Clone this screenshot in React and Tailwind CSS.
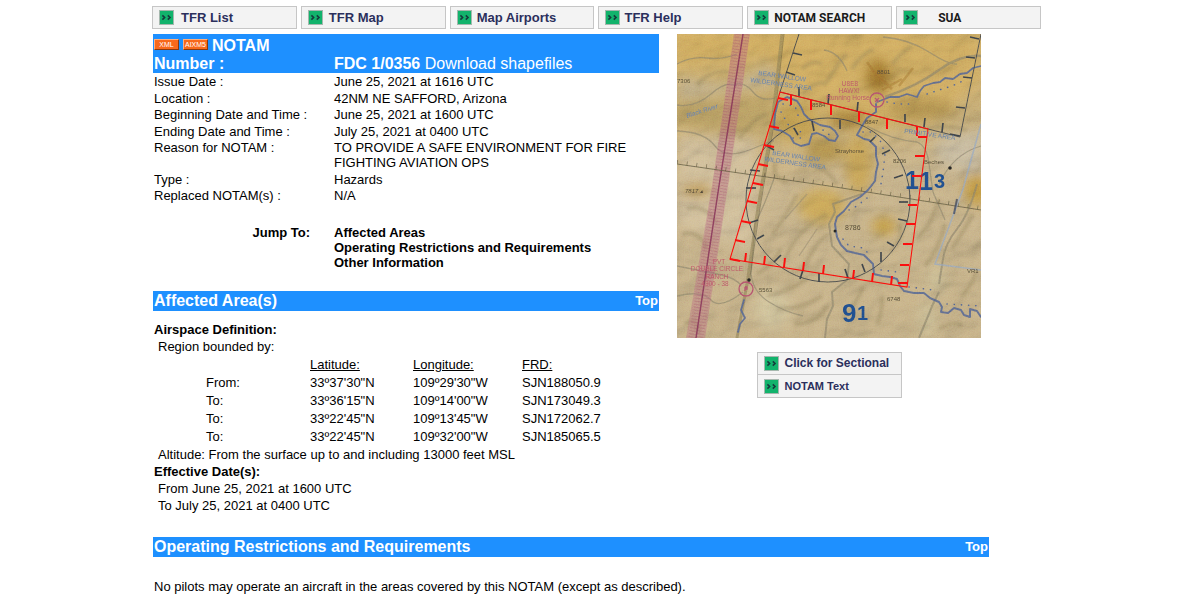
import React from "react";

const NAV = [
  { label: "TFR List", style: "pl-[7px] text-[13px] text-[#2b2f5c]" },
  { label: "TFR Map", style: "pl-[6px] text-[13px] text-[#2b2f5c]" },
  { label: "Map Airports", style: "pl-[5px] text-[13px] text-[#2b2f5c]" },
  { label: "TFR Help", style: "pl-[4px] text-[13px] text-[#2b2f5c]" },
  { label: "NOTAM SEARCH", style: "pl-[5px] font-['Roboto'] text-[12px] text-[#1b1b1b]" },
  { label: "SUA", style: "pl-[20px] font-['Roboto'] text-[12px] text-[#1b1b1b]" },
];

const DETAILS = [
  ["Issue Date :", "June 25, 2021 at 1616 UTC"],
  ["Location :", "42NM NE SAFFORD, Arizona"],
  ["Beginning Date and Time :", "June 25, 2021 at 1600 UTC"],
  ["Ending Date and Time :", "July 25, 2021 at 0400 UTC"],
  ["Reason for NOTAM :", "TO PROVIDE A SAFE ENVIRONMENT FOR FIRE FIGHTING AVIATION OPS"],
  ["Type :", "Hazards"],
  ["Replaced NOTAM(s) :", "N/A"],
];

const POINTS = [
  ["From:", "33º37'30\"N", "109º29'30\"W", "SJN188050.9"],
  ["To:", "33º36'15\"N", "109º14'00\"W", "SJN173049.3"],
  ["To:", "33º22'45\"N", "109º13'45\"W", "SJN172062.7"],
  ["To:", "33º22'45\"N", "109º32'00\"W", "SJN185065.5"],
];

function Arrows() {
  return (
    <svg className="size-[15px] shrink-0" viewBox="0 0 15 15" aria-hidden="true">
      <rect x="0.5" y="0.5" width="14" height="14" fill="#12b36c" stroke="#a5b8ae" />
      <path d="M3.4 5.4l2.2 2.1-2.2 2.1M8.8 5.4l2.2 2.1-2.2 2.1" fill="none" stroke="#153a3c" strokeWidth="1.6" />
    </svg>
  );
}

function Bar({ title }) {
  return (
    <div className="flex h-5 items-center justify-between bg-[#1e90ff] px-px font-bold text-white">
      <h2 className="text-[16px] leading-5">{title}</h2>
      <a href="#top" className="text-[13px] leading-5">Top</a>
    </div>
  );
}

function Badge({ children }) {
  return (
    <a href="#download" className="mr-1 mb-1 flex h-[11px] w-[25px] items-center justify-center border border-t-[#ffb080] border-r-[#8a3a10] border-b-[#8a3a10] border-l-[#ffb080] bg-[#f8691c] text-[7px] leading-none font-normal">
      {children}
    </a>
  );
}

const TOP_TICKS = [[114, 61], [134, 66], [154, 71], [182, 78], [210, 85], [240, 92]];
const LEFT_TICKS = [[101, 64], [92, 92], [87, 111], [81, 130], [76, 149], [70, 167], [64, 187], [58, 206], [53, 225]];
const BOTTOM_TICKS = [[68, 228], [87, 231], [107, 233], [126, 237], [146, 240], [176, 245], [195, 248], [214, 251]];
const RIGHT_TICKS = [[250, 103], [247, 122], [244, 142], [240, 171], [238, 190], [235, 210], [232, 231], [230, 249]];
const OUTER_TICKS = [
  "M116 19l9 2", "M109 38l9 3", "M122 62v-9", "M151 70l1-10", "M180 78l1-10", "M228 88v-8", "M247 93l1-9",
  "M265 98l1-9", "M283 102l-10-2", "M288 74l-9-1", "M295 44l-9-1", "M298 24l-9-1", "M302 5l-9-2",
];
const RING_TICKS = [
  "M135 87l2 10", "M163 86v9", "M117 94l4 7", "M90 112l7 4", "M198 103l-5 5", "M213 116l-8 4", "M226 141l-9 3",
  "M231 168h-9", "M230 187l-9-2", "M217 212l-7-4", "M204 228v-10", "M188 238l-3-8", "M171 244l-3-9", "M142 248v-9",
  "M123 245l3-9", "M97 228l7-7", "M80 205l7-4", "M72 189l9-3", "M69 154h10", "M73 136l10 1",
];
const RIDGES = [
  "M95 200Q110 182 120 160", "M108 225Q120 195 150 180", "M128 232Q140 205 152 200", "M80 240Q95 232 104 215",
  "M90 262Q110 258 130 245", "M100 275Q125 275 145 262", "M118 290Q140 290 150 272", "M165 285Q180 270 186 252",
  "M200 290Q206 275 205 262", "M212 218Q228 205 222 190", "M240 205Q255 190 262 165", "M248 232Q262 215 268 190",
  "M275 215Q288 195 296 180", "M285 262Q296 250 300 235", "M262 295Q280 285 285 292", "M10 175Q30 170 40 190",
  "M5 200Q22 195 30 215", "M8 290Q20 280 22 300", "M125 35Q135 25 145 30", "M150 48Q160 30 170 20",
  "M175 35Q182 22 196 15", "M215 30Q225 18 235 12", "M250 95Q270 90 290 96", "M125 60Q140 45 150 50",
  "M20 50Q35 35 52 38", "M62 105Q75 85 90 80", "M135 130Q150 135 160 150", "M110 148Q95 145 98 128",
];

function SectionalMap() {
  return (
    <svg className="block aspect-square w-full" viewBox="0 0 304 304" role="img" aria-label="Sectional chart of the restricted area">
      <defs>
        <linearGradient id="land" x1="0" y1="0" x2="0.15" y2="1">
          <stop offset="0" stopColor="#d2ae64" />
          <stop offset="0.35" stopColor="#caac6e" />
          <stop offset="0.55" stopColor="#c8b286" />
          <stop offset="1" stopColor="#c6b083" />
        </linearGradient>
        <filter id="soft" x="-30%" y="-30%" width="160%" height="160%">
          <feGaussianBlur stdDeviation="6" />
        </filter>
        <filter id="ridge" x="-10%" y="-10%" width="120%" height="120%">
          <feGaussianBlur stdDeviation="1.6" />
        </filter>
        <filter id="relief" x="0" y="0" width="100%" height="100%">
          <feTurbulence type="fractalNoise" baseFrequency="0.022 0.03" numOctaves="3" seed="8" />
          <feColorMatrix values="0 0 0 0 0  0 0 0 0 0  0 0 0 0 0  1 0 0 0 0" />
          <feDiffuseLighting surfaceScale="9" lightingColor="#ffffff">
            <feDistantLight azimuth="225" elevation="52" />
          </feDiffuseLighting>
        </filter>
        <filter id="grain" x="0" y="0" width="100%" height="100%">
          <feTurbulence type="fractalNoise" baseFrequency="0.8" numOctaves="2" seed="3" />
          <feColorMatrix type="saturate" values="0.5" />
          <feComponentTransfer><feFuncA type="linear" slope="0" intercept="1" /></feComponentTransfer>
        </filter>
        <clipPath id="frame"><rect width="304" height="304" /></clipPath>
      </defs>
      <g clipPath="url(#frame)">
        <rect width="304" height="304" fill="url(#land)" />
        <g filter="url(#soft)">
          <path d="M0 0H304V45L250 90 170 95 110 50 90 20 0 30Z" fill="#d3aa58" opacity="0.7" />
          <path d="M0 62L60 70 95 60 92 85 60 100 0 92Z" fill="#b59a5e" opacity="0.9" />
          <path d="M0 42L50 50 95 30 100 52 60 58 0 66Z" fill="#c0b08c" opacity="0.8" />
          <path d="M0 100L80 105 75 215 0 190Z" fill="#d2bf98" opacity="0.9" />
          <path d="M258 108L304 95V140L262 130Z" fill="#c9bda0" opacity="0.9" />
          <ellipse cx="120" cy="88" rx="22" ry="20" fill="#c39d50" />
          <ellipse cx="148" cy="116" rx="20" ry="12" fill="#b18f4c" />
          <ellipse cx="182" cy="130" rx="14" ry="30" fill="#c8a254" />
          <ellipse cx="145" cy="172" rx="24" ry="18" fill="#cba452" opacity="0.9" />
          <ellipse cx="207" cy="192" rx="12" ry="9" fill="#c69b42" />
          <ellipse cx="20" cy="156" rx="16" ry="7" fill="#c59a4a" opacity="0.8" />
          <ellipse cx="300" cy="156" rx="12" ry="16" fill="#c5983f" />
          <ellipse cx="201" cy="42" rx="13" ry="18" fill="#a0742f" />
          <ellipse cx="245" cy="75" rx="34" ry="10" fill="#ae8c4c" />
          <ellipse cx="170" cy="85" rx="20" ry="9" fill="#ab823c" />
          <ellipse cx="95" cy="275" rx="18" ry="20" fill="#d3c498" />
          <ellipse cx="260" cy="245" rx="8" ry="14" fill="#d0c294" />
          <ellipse cx="250" cy="285" rx="8" ry="18" fill="#d0c294" />
        </g>
        <rect width="304" height="304" filter="url(#relief)" className="opacity-30 mix-blend-multiply" />
        <g fill="none" stroke="#837350" strokeWidth="4" opacity="0.35" filter="url(#ridge)">
          {RIDGES.map((d) => <path key={d} d={d} />)}
        </g>
        <path d="M190 28L197 38 215 55M222 52L236 34M205 56L225 45" fill="none" stroke="#9c6a2c" strokeWidth="2.5" opacity="0.45" />

        <g fill="none" stroke="#857c65" strokeWidth="1.3" opacity="0.65">
          <path d="M0 30Q15 22 30 24T60 20" />
          <path d="M0 97Q28 98 38 112T75 115 95 108" />
          <path d="M0 71Q18 74 34 60T60 52" />
          <path d="M58 50Q68 48 76 58T98 64" />
          <path d="M147 16Q162 18 170 37" />
          <path d="M206 3Q232 5 252 18T280 30" />
          <path d="M208 63Q240 52 262 36T304 22" strokeWidth="2.4" />
          <path d="M190 92Q215 106 240 108Q250 112 252 130L256 158 268 186" />
          <path d="M262 150Q276 120 304 112" />
          <path d="M98 142Q88 170 78 190L74 240Q76 258 92 268T126 282" />
          <path d="M0 232Q20 236 40 240T64 252" />
          <path d="M0 262Q25 256 34 266T66 258" />
          <path d="M148 304L150 285 156 272 155 258 170 246 172 230 155 212 152 190 158 178 156 170 185 160" strokeWidth="2" />
          <path d="M300 150Q292 180 280 195T266 225L262 250" strokeWidth="2" />
          <path d="M242 304L256 270 262 258" strokeWidth="2" />
          <path d="M130 160L108 185M140 195L122 222" opacity="0.7" />
        </g>

        <path d="M57 0H73L51 152L28 304H9L35 152Z" fill="#b35f7a" opacity="0.4" />
        <path d="M61 0L39 152L15 304M69 0L47 152L23 304" fill="none" stroke="#93405f" strokeWidth="7" strokeDasharray="1 2" opacity="0.28" />
        <path d="M66 0L42 152L19 304" stroke="#78294f" strokeWidth="1.5" fill="none" opacity="0.8" />

        <path d="M105 0L95 90 80 180 70 250 60 304" fill="none" stroke="#857650" strokeWidth="3" opacity="0.6" />
        <path d="M107 0L97 90 82 180 72 250" fill="none" stroke="#4d4a37" strokeWidth="0.8" opacity="0.6" />
        <path d="M0 130L152 152L304 176" fill="none" stroke="#5b543f" strokeWidth="0.8" />
        <path d="M0 128L152 150L304 174" fill="none" stroke="#5b543f" strokeWidth="4" strokeDasharray="0.8 9" opacity="0.8" />
        <path d="M304 90L286 155 258 230 304 236" fill="none" stroke="#8fa3bd" strokeWidth="1.6" opacity="0.7" />
        <path d="M280 165L277 180" stroke="#3d4458" strokeWidth="2" opacity="0.8" />

        <g fill="none" stroke="#4d5f8c" strokeLinecap="round" strokeLinejoin="round" opacity="0.85">
          <path d="M304 32L296 34 290 39 283 40 276 45 268 44 263 48 256 49 247 52 243 57 240 63 230 60 222 63 213 63 200 68" strokeWidth="1.8" />
          <path d="M97 95L105 97 113 102 117 109 124 112 132 110 135 100 140 99 147 102 152 106 158 107 161 102 158 97 153 93 143 91 135 87 131 84 127 80 124 73 120 67 110 63 101 68 98 80 97 95" strokeWidth="1.9" />
          <path d="M199 70L199 78 190 84 185 92 180 101 187 105 192 106 199 113 199 122 201 130 199 138 198 147 191 156 183 163 174 168 167 177 160 183 158 190 159 197 160 203 164 211 170 217 178 219 187 221 196 230 197 240 205 242 213 243 220 245 223 252 227 257 237 259 247 259 253 264 262 268 265 273 264 278 271 279 277 274 284 276 287 281 293 283 293 275 300 277 304 283" strokeWidth="2" />
          <path d="M67 266L64 276 68 284 63 290 61 298" strokeWidth="1.8" />
        </g>
        <g fill="none" stroke="#4d5f8c" strokeWidth="1.6" strokeDasharray="0.2 7" strokeLinecap="round">
          <path d="M106 70L118 72 122 84M104 78L112 92 124 98M116 104L128 104M146 96L154 102" />
          <path d="M186 98L195 98 204 108 208 120 206 138 204 150" />
          <path d="M172 176L180 172 190 164" />
          <path d="M166 205L172 212 186 214 194 222M204 236L220 238M232 253L256 256M270 270L304 272" />
          <path d="M210 68L222 70 236 70M250 60L262 56 275 52 290 45" />
        </g>

        <g fill="none" stroke="#3a4046" strokeWidth="0.9">
          <circle cx="151" cy="166" r="82" />
          <path d="M122 0L103 58L283 103L304 0" />
        </g>
        <g stroke="#3a4046" strokeWidth="1.7">
          {[...RING_TICKS, ...OUTER_TICKS].map((d) => <path key={d} d={d} />)}
        </g>

        <g className="font-['Liberation_Sans'] font-bold" fill="#1e4a86">
          <text x="228" y="155" fontSize="25">1</text>
          <text x="242" y="156" fontSize="25">1</text>
          <text x="257" y="154" fontSize="20">3</text>
          <text x="165" y="288" fontSize="26">9</text>
          <text x="180" y="286" fontSize="20">1</text>
        </g>

        <path d="M103 58L251 95L230 253L53 225Z" fill="none" stroke="#fb0d0d" strokeWidth="1.1" />
        <g stroke="#fb0d0d" strokeWidth="2">
          {TOP_TICKS.map(([x, y]) => <path key={x} d={`M${x} ${y}v10`} />)}
          {LEFT_TICKS.map(([x, y]) => <path key={x} d={`M${x} ${y}l10 2`} />)}
          {BOTTOM_TICKS.map(([x, y]) => <path key={x} d={`M${x} ${y}l1 -9`} />)}
          {RIGHT_TICKS.map(([x, y]) => <path key={x} d={`M${x} ${y}h-9`} />)}
        </g>

        <g fill="none" stroke="#b04e68" strokeWidth="1.3">
          <circle cx="200" cy="66" r="7" />
          <path d="M198 64l4 4M202 64l-4 4" />
          <circle cx="69" cy="255" r="7" />
          <path d="M68 253v4M68 253h2v2h-2" />
        </g>
        <circle cx="72" cy="246" r="1.8" fill="#222" />
        <circle cx="273" cy="134" r="1.8" fill="#222" />
        <circle cx="158" cy="197" r="1.5" fill="#222" />

        <g className="font-['Liberation_Sans']" fontSize="6.5" fill="#5877a6">
          <text x="81" y="41" transform="rotate(8 81 41)">BEAR WALLOW</text>
          <text x="73" y="48" transform="rotate(8 73 48)">WILDERNESS AREA</text>
          <text x="95" y="121" transform="rotate(8 95 121)">BEAR WALLOW</text>
          <text x="87" y="127" transform="rotate(8 87 127)">WILDERNESS AREA</text>
          <text x="227" y="99" transform="rotate(8 227 99)">PRIMITIVE AREA</text>
          <text x="10" y="84" transform="rotate(-18 10 84)" className="italic">Black River</text>
        </g>
        <g className="font-['Liberation_Sans']" fontSize="6.5" fill="#b85062" textAnchor="middle">
          <text x="173" y="52">U8E8</text>
          <text x="172" y="59">HAWX!</text>
          <text x="171" y="66">Running Horse</text>
          <text x="42" y="230">PVT</text>
          <text x="40" y="237">DOUBLE CIRCLE</text>
          <text x="40" y="245">RANCH</text>
          <text x="38" y="252">4300 - 38</text>
        </g>
        <g className="font-['Liberation_Sans']" fontSize="6" fill="#4b4434">
          <text x="0" y="49">7306</text>
          <text x="8" y="159" className="italic">7817 ▴</text>
          <text x="200" y="40">8801</text>
          <text x="158" y="119">Strayhorse</text>
          <text x="188" y="90">8847</text>
          <text x="135" y="73">8584</text>
          <text x="216" y="129">8206</text>
          <text x="247" y="130">Beches</text>
          <text x="168" y="196" fontSize="7">8786</text>
          <text x="210" y="267">6748</text>
          <text x="82" y="258">5563</text>
          <text x="290" y="239">VR1</text>
        </g>
        <rect width="304" height="304" filter="url(#grain)" className="opacity-20 mix-blend-overlay" />
      </g>
    </svg>
  );
}

export default function App() {
  return (
    <div id="top" className="min-h-screen bg-white font-['Liberation_Sans',Arial,sans-serif] text-[13px] leading-[15px] text-black">
      <div className="mx-auto max-w-[896px] pt-[6px]">
        <nav className="mr-[7px] grid grid-cols-6 gap-1">
          {NAV.map(({ label, style }) => (
            <a key={label} href="#nav" className="flex h-[23px] items-center border border-[#c6c6c6] bg-[#f3f3f3] pl-[6px]">
              <Arrows />
              <span className={`font-bold leading-none ${style}`}>{label}</span>
            </a>
          ))}
        </nav>

        <main className="mr-[59px] ml-px mt-[5px]">
          <div className="flex items-start justify-between gap-4">
            <div className="max-w-[506px] grow">
              <header className="flex h-[39px] items-end bg-[#1e90ff] pl-px text-[16px] leading-[18px] text-white">
                <h1 className="w-[180px] pr-12 font-bold">
                  <span className="flex items-center">
                    <Badge>XML</Badge>
                    <Badge>AIXM5</Badge>
                    NOTAM
                  </span>
                  Number :
                </h1>
                <p><b>FDC 1/0356</b> <a href="#shapefiles">Download shapefiles</a></p>
              </header>

              <table className="h-[131px] w-full text-left align-top">
                <tbody>
                  {DETAILS.map(([label, value]) => (
                    <tr key={label} className="align-top">
                      <th scope="row" className="w-[181px] pt-px pl-px font-normal">{label}</th>
                      <td className="pt-px pr-4">{value}</td>
                    </tr>
                  ))}
                </tbody>
              </table>

              <div className="mt-[21px] mb-[21px] flex font-bold">
                <span className="w-[157px] text-right">Jump To:</span>
                <nav className="ml-6 flex flex-col items-start">
                  <a href="#affected">Affected Areas</a>
                  <a href="#operating">Operating Restrictions and Requirements</a>
                  <a href="#other">Other Information</a>
                </nav>
              </div>

              <section id="affected">
                <Bar title="Affected Area(s)" />
                <div className="mt-[10px] pl-px leading-[17px]">
                  <h3 className="font-bold">Airspace Definition:</h3>
                  <p className="pl-1">Region bounded by:</p>
                  <table className="mt-px ml-[52px] w-[425px] table-fixed text-left leading-[18px]">
                    <thead>
                      <tr className="underline">
                        <td className="w-[104px]"></td>
                        <th scope="col" className="w-[103px] font-normal">Latitude:</th>
                        <th scope="col" className="w-[109px] font-normal">Longitude:</th>
                        <th scope="col" className="font-normal">FRD:</th>
                      </tr>
                    </thead>
                    <tbody>
                      {POINTS.map(([name, ...cells]) => (
                        <tr key={cells[1]}>
                          <th scope="row" className="font-normal">{name}</th>
                          {cells.map((c) => <td key={c}>{c}</td>)}
                        </tr>
                      ))}
                    </tbody>
                  </table>
                  <p className="pl-1">Altitude: From the surface up to and including 13000 feet MSL</p>
                  <h3 className="font-bold">Effective Date(s):</h3>
                  <p className="pl-1">From June 25, 2021 at 1600 UTC</p>
                  <p className="pl-1">To July 25, 2021 at 0400 UTC</p>
                </div>
              </section>
            </div>

            <aside className="mr-2 w-[304px] shrink-0">
              <SectionalMap />
              <div className="mx-auto mt-[14px] w-[145px] border border-[#c6c6c6] bg-[#f3f3f3] font-bold text-[#2b2f5c]">
                <a href="#sectional" className="flex h-[22px] items-center gap-[6px] border-b border-[#c6c6c6] pl-[6px] text-[12px]">
                  <Arrows />Click for Sectional
                </a>
                <a href="#text" className="flex h-[22px] items-center gap-[6px] pl-[6px] text-[11px]">
                  <Arrows />NOTAM Text
                </a>
              </div>
            </aside>
          </div>

          <section id="operating" className="mt-[23px]">
            <Bar title="Operating Restrictions and Requirements" />
            <p className="mt-[22px] pl-px">No pilots may operate an aircraft in the areas covered by this NOTAM (except as described).</p>
          </section>
        </main>
      </div>
    </div>
  );
}
